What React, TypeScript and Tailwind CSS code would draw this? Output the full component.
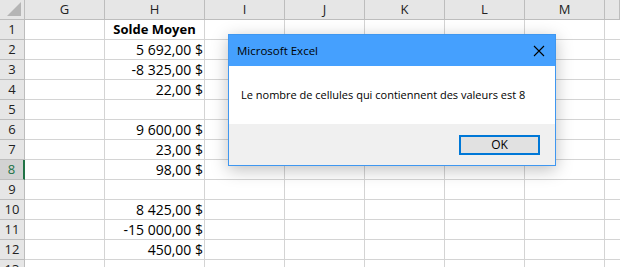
const COLS = ['G', 'H', 'I', 'J', 'K', 'L', 'M', ''];

const VALUES: Record<number, string> = {
  2: '5 692,00 $',
  3: '-8 325,00 $',
  4: '22,00 $',
  6: '9 600,00 $',
  7: '23,00 $',
  8: '98,00 $',
  10: '8 425,00 $',
  11: '-15 000,00 $',
  12: '450,00 $',
};

const ROWS = [1, 2, 3, 4, 5, 6, 7, 8, 9, 10, 11, 12, 13];

const gridCols = 'grid grid-cols-[25px_80px_100px_80px_80px_80px_80px_80px_1fr]';

export default function App() {
  return (
    <div className="relative w-[620px] h-[267px] overflow-hidden bg-white font-['Open_Sans',sans-serif] text-black">
      {/* column headers */}
      <div className={`${gridCols} h-[20px] bg-[#e6e6e6]`}>
        <div className="relative border-r border-b border-[#bdbdbd]">
          <div className="absolute right-[3px] bottom-[3px] w-0 h-0 border-l-[14px] border-l-transparent border-b-[14px] border-b-[#b5b5b5]" />
        </div>
        {COLS.map((c, i) => (
          <div
            key={i}
            className="flex items-center justify-center border-r border-b border-[#bdbdbd] text-[13px] leading-none text-[#222]"
          >
            {c}
          </div>
        ))}
      </div>

      {/* rows */}
      {ROWS.map((r) => (
        <div key={r} className={`${gridCols} h-[20px]`}>
          <div
            className={`flex items-center justify-center border-b border-[#bdbdbd] text-[13px] leading-none ${
              r === 8
                ? 'bg-[#d2d2d2] text-[#217346] border-r-2 border-r-[#217346]'
                : 'bg-[#e6e6e6] text-[#222] border-r border-r-[#bdbdbd]'
            }`}
          >
            {r}
          </div>
          <div className="border-r border-b border-[#d4d4d4]" />
          <div
            className={`flex items-center border-r border-b border-[#d4d4d4] leading-none ${
              r === 1 ? 'justify-center font-bold text-[13px]' : 'justify-end pr-[1px] text-[14px]'
            }`}
          >
            {r === 1 ? 'Solde Moyen' : VALUES[r] ?? ''}
          </div>
          <div className="border-r border-b border-[#d4d4d4]" />
          <div className="border-r border-b border-[#d4d4d4]" />
          <div className="border-r border-b border-[#d4d4d4]" />
          <div className="border-r border-b border-[#d4d4d4]" />
          <div className="border-r border-b border-[#d4d4d4]" />
          <div className="border-b border-[#d4d4d4]" />
        </div>
      ))}

      {/* message box */}
      <div className="absolute left-[228px] top-[34px] w-[328px] h-[132px] flex flex-col border border-[#3f97f0] bg-white shadow-[0_4px_16px_rgba(0,0,0,0.25)]">
        <div className="flex items-center justify-between h-[31px] bg-[#45a0fe] pl-[8px] pr-[10px] text-[11.5px]">
          <span>Microsoft Excel</span>
          <svg width="12" height="12" viewBox="0 0 12 12" fill="none" stroke="#000" strokeWidth="1.1">
            <path d="M1 1 L11 11 M11 1 L1 11" />
          </svg>
        </div>
        <div className="flex items-center h-[58px] pl-[12px] text-[11px]">
          Le nombre de cellules qui contiennent des valeurs est 8
        </div>
        <div className="flex-1 flex items-center justify-end pr-[15px] bg-[#f0f0f0]">
          <button className="w-[81px] h-[20px] flex items-center justify-center border-2 border-[#0078d7] bg-[#e1e1e1] text-[12px] leading-none">
            OK
          </button>
        </div>
      </div>
    </div>
  );
}
